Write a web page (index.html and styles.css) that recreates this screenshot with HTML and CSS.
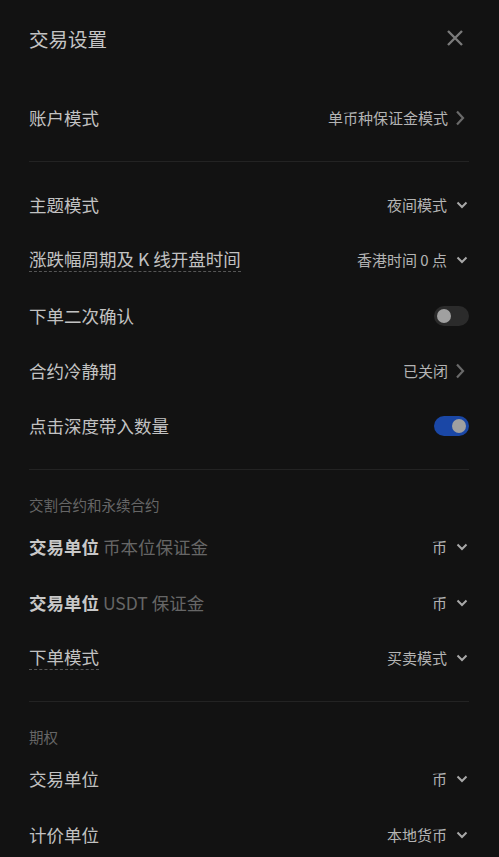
FILE: index.html
```html
<!DOCTYPE html>
<html lang="zh-CN">
<head>
<meta charset="utf-8">
<title>交易设置</title>
<link rel="stylesheet" href="styles.css">
</head>
<body>
<div class="panel">
  <div class="header">
    <div class="title">交易设置</div>
    <svg class="close" width="18" height="18" viewBox="0 0 18 18"><path d="M2 2 L16 16 M16 2 L2 16" stroke="#7a7a7a" stroke-width="2.4" fill="none"/></svg>
  </div>

  <div class="group g1">
    <div class="row r55">
      <span class="label">账户模式</span>
      <span class="value">单币种保证金模式<svg class="chev-r" width="10" height="16" viewBox="0 0 10 16"><path d="M2 1.5 L8 8 L2 14.5" stroke="#6a6a6a" stroke-width="2.2" fill="none"/></svg></span>
    </div>
  </div>
  <div class="divider"></div>

  <div class="group">
    <div class="row r5525">
      <span class="label">主题模式</span>
      <span class="value">夜间模式<svg class="chev-d" width="12" height="8" viewBox="0 0 12 8"><path d="M1.5 1.5 L6 6 L10.5 1.5" stroke="#a8a8a8" stroke-width="2" fill="none"/></svg></span>
    </div>
    <div class="row r5525">
      <span class="label"><span class="dashed">涨跌幅周期及 K 线开盘时间</span></span>
      <span class="value">香港时间 0 点<svg class="chev-d" width="12" height="8" viewBox="0 0 12 8"><path d="M1.5 1.5 L6 6 L10.5 1.5" stroke="#a8a8a8" stroke-width="2" fill="none"/></svg></span>
    </div>
    <div class="row r5525">
      <span class="label">下单二次确认</span>
      <span class="toggle"><span class="knob"></span></span>
    </div>
    <div class="row r5525">
      <span class="label">合约冷静期</span>
      <span class="value">已关闭<svg class="chev-r" width="10" height="16" viewBox="0 0 10 16"><path d="M2 1.5 L8 8 L2 14.5" stroke="#6a6a6a" stroke-width="2.2" fill="none"/></svg></span>
    </div>
    <div class="row r5525">
      <span class="label">点击深度带入数量</span>
      <span class="toggle on"><span class="knob"></span></span>
    </div>
  </div>
  <div class="divider"></div>

  <div class="section-label">交割合约和永续合约</div>
  <div class="group">
    <div class="row r555">
      <span class="label"><b class="strong">交易单位</b> <span class="sub">币本位保证金</span></span>
      <span class="value">币<svg class="chev-d" width="12" height="8" viewBox="0 0 12 8"><path d="M1.5 1.5 L6 6 L10.5 1.5" stroke="#a8a8a8" stroke-width="2" fill="none"/></svg></span>
    </div>
    <div class="row r555">
      <span class="label"><b class="strong">交易单位</b> <span class="sub">USDT 保证金</span></span>
      <span class="value">币<svg class="chev-d" width="12" height="8" viewBox="0 0 12 8"><path d="M1.5 1.5 L6 6 L10.5 1.5" stroke="#a8a8a8" stroke-width="2" fill="none"/></svg></span>
    </div>
    <div class="row r555">
      <span class="label"><span class="dashed">下单模式</span></span>
      <span class="value">买卖模式<svg class="chev-d" width="12" height="8" viewBox="0 0 12 8"><path d="M1.5 1.5 L6 6 L10.5 1.5" stroke="#a8a8a8" stroke-width="2" fill="none"/></svg></span>
    </div>
  </div>
  <div class="divider"></div>

  <div class="section-label">期权</div>
  <div class="group">
    <div class="row r555">
      <span class="label">交易单位</span>
      <span class="value">币<svg class="chev-d" width="12" height="8" viewBox="0 0 12 8"><path d="M1.5 1.5 L6 6 L10.5 1.5" stroke="#a8a8a8" stroke-width="2" fill="none"/></svg></span>
    </div>
    <div class="row r555">
      <span class="label">计价单位</span>
      <span class="value">本地货币<svg class="chev-d" width="12" height="8" viewBox="0 0 12 8"><path d="M1.5 1.5 L6 6 L10.5 1.5" stroke="#a8a8a8" stroke-width="2" fill="none"/></svg></span>
    </div>
  </div>
</div>
</body>
</html>
```

FILE: styles.css
```css
html, body {
  margin: 0;
  padding: 0;
  background: #121212;
}
body {
  font-family: "Noto Sans CJK SC", "Noto Sans", sans-serif;
  color: #c2c2c2;
  overflow: hidden;
}
.panel {
  padding: 0 30px 0 29px;
}
.header {
  height: 78px;
  display: flex;
  align-items: center;
  justify-content: space-between;
}
.title {
  font-size: 19.5px;
  line-height: 24px;
  margin-top: -1px;
  color: #c4c4c4;
}
.close {
  margin-right: 5px;
  margin-top: -2px;
}
.g1 {
  margin-top: 12.5px;
}
.row {
  display: flex;
  align-items: center;
  justify-content: space-between;
}
.r55 { height: 55px; }
.r5525 { height: 55.25px; }
.r555 { height: 55.5px; }
.label {
  font-size: 17.5px;
  line-height: 22px;
  color: #c2c2c2;
  white-space: nowrap;
}
.dashed {
  display: inline-block;
  line-height: 22px;
  padding-bottom: 1px;
  border-bottom: 1px dashed #555;
}
.strong {
  font-weight: 600;
  color: #c8c8c8;
}
.sub {
  color: #666;
}
.value {
  display: flex;
  align-items: center;
  font-size: 15px;
  line-height: 20px;
  color: #b4b4b4;
}
.chev-r {
  margin-left: 7px;
  margin-right: 4px;
}
.chev-d {
  margin-left: 9px;
  margin-right: 1px;
}
.divider {
  height: 1px;
  background: #232323;
}
.g1 + .divider {
  margin: 15px 0 16px;
}
.group + .divider {
  margin-top: 15px;
}
.divider + .group {
  margin-top: 16px;
}
.section-label {
  margin-top: 25px;
  margin-bottom: 4.5px;
  font-size: 14.5px;
  line-height: 20px;
  color: #666;
}
.toggle {
  position: relative;
  width: 35px;
  height: 20px;
  border-radius: 10px;
  background: #2b2b2b;
}
.toggle .knob {
  position: absolute;
  top: 3px;
  left: 3px;
  width: 14px;
  height: 14px;
  border-radius: 50%;
  background: #a0a0a0;
}
.toggle.on {
  background: #1a47a6;
}
.toggle.on .knob {
  left: 18px;
}
```
